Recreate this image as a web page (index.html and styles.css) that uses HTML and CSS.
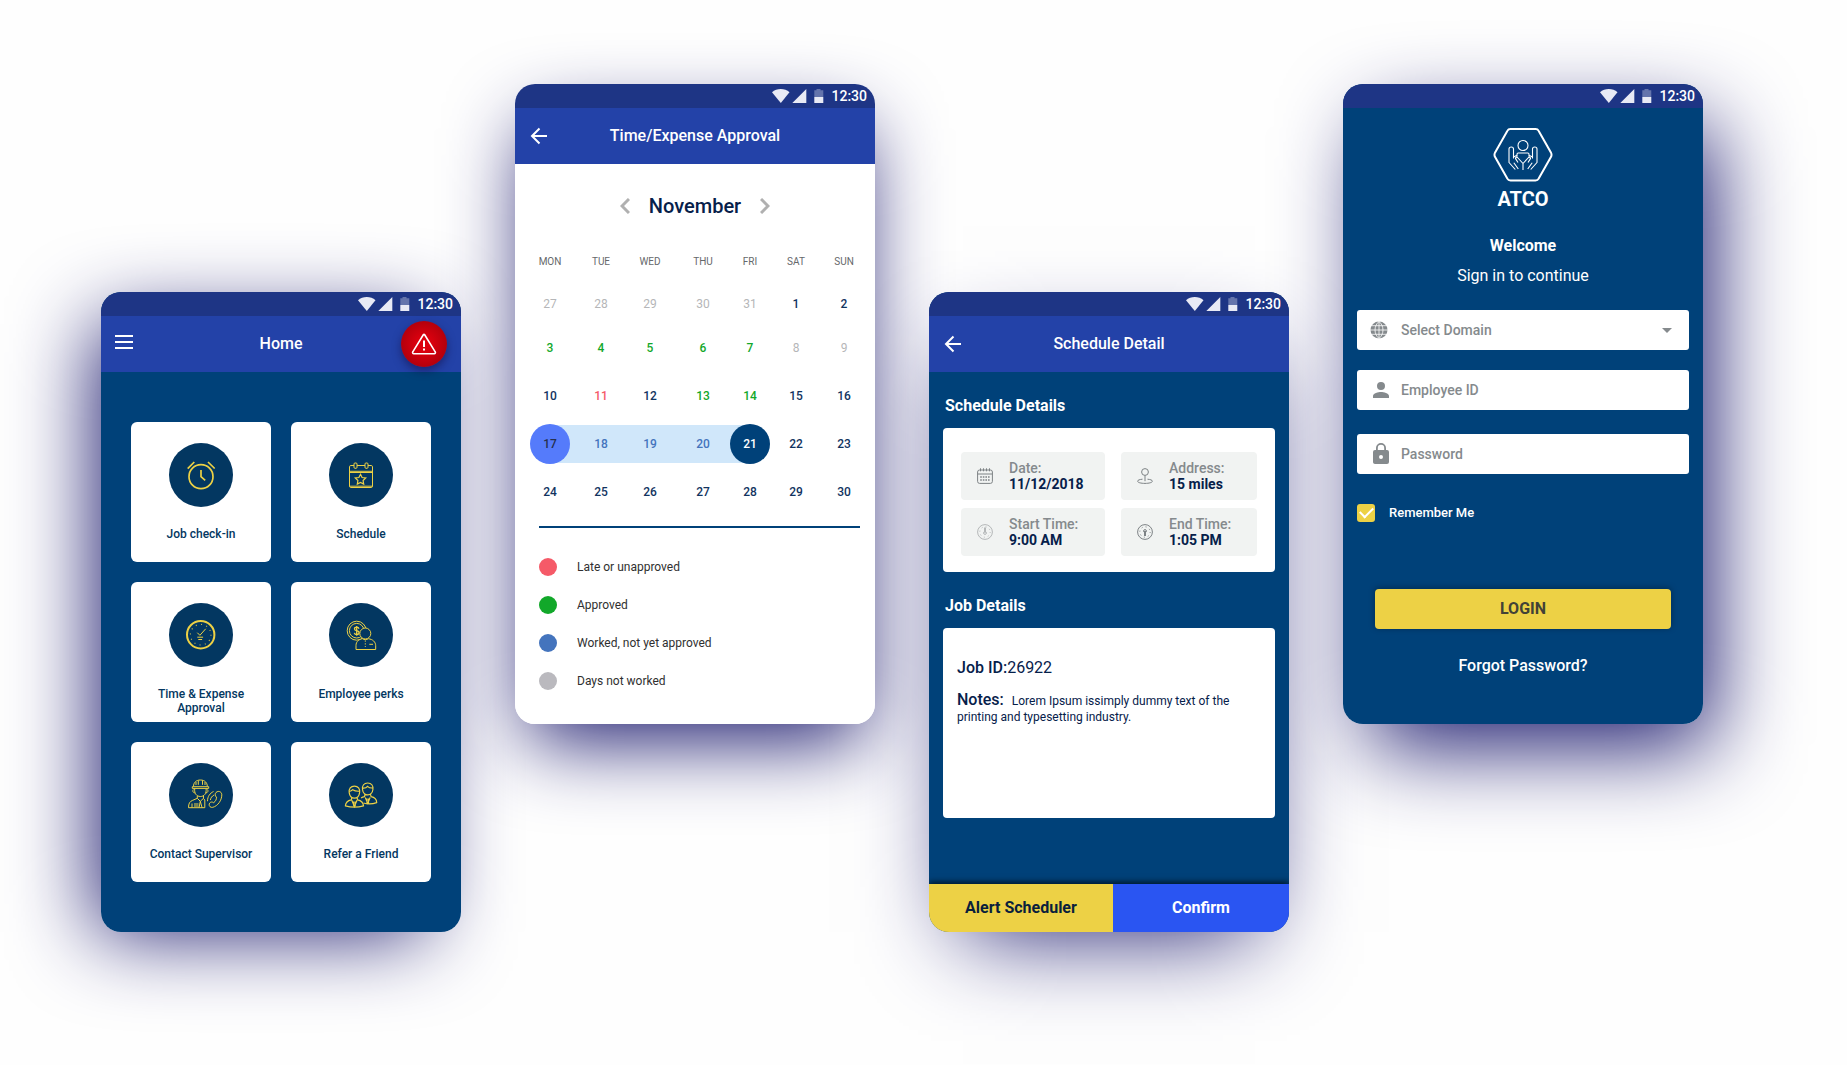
FILE: index.html
```html
<!DOCTYPE html>
<html lang="en">
<head>
<meta charset="utf-8">
<meta name="viewport" content="width=device-width, initial-scale=1">
<title>ATCO mobile screens</title>
<link rel="stylesheet" href="styles.css">
</head>
<body>
<svg class="sprite" aria-hidden="true">
  <symbol id="status-icons" viewBox="0 0 52 14">
    <path fill="#e8eaf5" d="M0 3.2C2.4 1.2 5.5 0 8.8 0s6.3 1.2 8.7 3.2L8.8 14z"/>
    <path fill="#e8eaf5" d="M34.300 0v14h-14z"/>
    <path fill="#e8eaf5" fill-opacity=".35" d="M44.500 0h4v1.200h2.800V8h-9V1.200h2.200z"/>
    <path fill="#e8eaf5" d="M42.300 8h9v6h-9z"/>
  </symbol>
  <symbol id="back" viewBox="0 0 24 24">
    <path fill="none" stroke="#fff" stroke-width="2" d="M18 12H3.500M10.500 4.500 3 12l7.500 7.500"/>
  </symbol>
</svg>

<main class="stage">

  <section class="phone phone-home">
    <div class="screen">
      <div class="status"><svg class="status-icons"><use href="#status-icons"/></svg><time>12:30</time></div>
      <header class="bar">
        <button class="icon-btn" type="button" aria-label="Menu">
          <svg width="24" height="24" viewBox="0 0 24 24"><path stroke="#fff" stroke-width="2" d="M0 4h18M0 10h18M0 16h18"/></svg>
        </button>
        <h1>Home</h1>
        <button class="alert-btn" type="button" aria-label="Emergency alert">
          <svg width="26" height="26" viewBox="0 0 26 26" fill="none" stroke="#fff" stroke-width="1.600" stroke-linejoin="round" stroke-linecap="round"><path d="M12.500 3.500 1.800 20.800a1.200 1.200 0 0 0 1 1.900h20.400a1.200 1.200 0 0 0 1-1.900L13.500 3.500a.6.6 0 0 0-1 0z"/><path stroke-width="2" stroke-linecap="butt" d="M13 9.500V16M13 17.500v2"/></svg>
        </button>
      </header>
      <nav class="tiles">
        <a class="tile" href="#check-in">
          <svg class="tile-icon" viewBox="0 0 64 64"><g stroke-width="1.700"><circle cx="32" cy="33.700" r="12"/><path d="M32 27v6.600l4.200 3.700M18.700 25.700l6.600-6.700M39 19l6.700 6.500"/></g></svg>
          <span>Job check-in</span>
        </a>
        <a class="tile" href="#schedule">
          <svg class="tile-icon" viewBox="0 0 64 64"><path d="M25 22.500h-3.200c-.8 0-1.300.5-1.300 1.300v19.400c0 .8.5 1.300 1.300 1.300h20.400c.8 0 1.300-.5 1.300-1.300V23.800c0-.8-.5-1.300-1.300-1.300H39M28 22.500h8M20.500 28.300h23M20.500 29.500h23M20.500 43.200h23"/><rect x="25" y="20" width="3" height="5.300" rx="1"/><rect x="36" y="20" width="3" height="5.300" rx="1"/><path stroke-width="1.200" d="m31.500 31.300 1.600 3.200 3.600.5-2.600 2.500.6 3.600-3.200-1.700-3.200 1.700.6-3.600-2.600-2.500 3.600-.5z"/></svg>
          <span>Schedule</span>
        </a>
        <a class="tile" href="#approval">
          <svg class="tile-icon" viewBox="0 0 64 64"><circle cx="31.700" cy="31.700" r="13.700" stroke-width="2"/><circle cx="31.700" cy="31.700" r="10.300" stroke-width="1.200" stroke-dasharray="1.100 4.293" stroke-opacity=".8"/><path d="m28.300 29.700 2.600 2.600 5.800-6.500M28.300 34.200h5.800M29.300 36.500h3.800"/></svg>
          <span>Time &amp; Expense Approval</span>
        </a>
        <a class="tile" href="#perks">
          <svg class="tile-icon" viewBox="0 0 64 64"><circle cx="27.700" cy="27.700" r="9.500"/><circle cx="27.700" cy="27.700" r="7.300"/><path stroke-width="1.300" d="M30 25.700c-.3-1-1.200-1.500-2.300-1.500-1.300 0-2.200.7-2.200 1.700 0 2.400 4.600 1.200 4.600 3.800 0 1-.9 1.800-2.300 1.800-1.300 0-2.200-.6-2.500-1.700M27.700 23v9.700"/><path fill="#033761" d="M27 46.500v-4c0-4 3-6.300 6.500-6.800 1.800 1.300 4 1.300 5.800 0 4.500.6 7.400 3.300 7.400 7v3.800z"/><circle fill="#033761" cx="36.300" cy="30.500" r="5.500"/><path d="M40.300 41.300H44"/><path stroke-dasharray="1.200 1.600" d="M36.300 37.500V44"/></svg>
          <span>Employee perks</span>
        </a>
        <a class="tile" href="#contact">
          <svg class="tile-icon" viewBox="0 0 64 64"><path d="M24.500 23.500c0-4 2.600-6.500 6.900-6.500s6.900 2.500 6.900 6.500M23.300 23.700h16.400v1.700H23.300zM29.300 17.500v4.300M33.500 17.500v4.300M27 19v3M36 19v3M25.700 25.700c-.6 4.800 2 7.800 5.700 7.800s6.300-3 5.700-7.800M24.300 26.500c-1 1.700-.3 3 1.500 3.500M38.500 26.500c1 1.700.3 3-1.500 3.500M28.300 33v2.300l-5 2.200c-2.500 1-3.800 3-3.800 7.200h16.300V37l-1.300-1.500V33M28.300 35.300l3 3 3.200-3M31.300 38.300l-1.300 6.400M31.300 38.300l1.800 6.400M23 40.500v4.200M25 41h4.500M25 43h4.500"/><path d="M48 28.800c2.500-1.200 4.800.5 4.800 3 0 5.500-4 11.200-9 12.500-2.200.5-4-1-3.600-3.200.3-1.500 1.800-2.300 3.200-2l1.300.6c2-1.500 2.800-3.300 2.800-5.600l-1-1c-.9-1.500-.2-3.500 1.500-4.300zM44.500 28.500c-3.500 1.800-6 4.700-6 9.700M45 32c-2 1.200-3.300 2.800-3.600 5"/></svg>
          <span>Contact Supervisor</span>
        </a>
        <a class="tile" href="#refer">
          <svg class="tile-icon" viewBox="0 0 64 64"><g stroke-width="1.200"><path d="M33.500 26.500c-.5-4 1.500-6.500 5.200-6.500s5.700 2.500 5.200 6.500c-.4 3-2.300 5.300-5.200 5.300s-4.800-2.300-5.200-5.300zM33.700 25c2 .3 3.700-.3 4.800-1.700 1.300 1.300 3 1.800 5.200 1.700M41.500 31.300l.6 2.300c3.600.6 5.500 2.500 5.600 6-4 1.400-9.400 1.500-13.200.4M36 31.300l-.5 2.400c-1.500.2-2.500.6-3.400 1.200M36.300 34.500l2.400 6 2.400-6M38 35.500v5M39.500 35.500v5"/><path fill="#033761" d="M22.800 34.600l-.5 2.200c-3.700.7-5.700 2.600-5.900 6.100 5.500 1.600 12.500 1.600 18.100 0-.2-3.500-2.200-5.400-5.900-6.100l-.5-2.200"/><path fill="#033761" d="M20.200 29.600c-.5-4 1.500-6.500 5.200-6.500s5.700 2.500 5.200 6.500c-.4 3-2.300 5.500-5.200 5.500s-4.800-2.500-5.200-5.500z"/><path d="M20.300 28.500c1.500-.2 2.600-.8 3.400-1.800 1.800 1.200 4 1.700 6.700 1.500M22.700 37l2.700 6.500 2.700-6.500M24.700 38.500v5M26.200 38.500v5"/></g></svg>
          <span>Refer a Friend</span>
        </a>
      </nav>
    </div>
  </section>

  <section class="phone phone-approval">
    <div class="screen light">
      <div class="status"><svg class="status-icons"><use href="#status-icons"/></svg><time>12:30</time></div>
      <header class="bar">
        <button class="icon-btn" type="button" aria-label="Back"><svg width="24" height="24"><use href="#back"/></svg></button>
        <h1>Time/Expense Approval</h1>
      </header>
      <div class="month">
        <button class="chevron" type="button" aria-label="Previous month"><svg width="10" height="16" viewBox="0 0 10 16"><path d="M9 1 2 8l7 7"/></svg></button>
        <h2>November</h2>
        <button class="chevron" type="button" aria-label="Next month"><svg width="10" height="16" viewBox="0 0 10 16"><path d="m1 1 7 7-7 7"/></svg></button>
      </div>
      <table class="calendar">
        <colgroup><col class="c1"><col class="c2"><col class="c3"><col class="c4"><col class="c5"><col class="c6"><col class="c7"></colgroup>
        <thead><tr><th>MON</th><th>TUE</th><th>WED</th><th>THU</th><th>FRI</th><th>SAT</th><th>SUN</th></tr></thead>
        <tbody>
          <tr class="first"><td class="off">27</td><td class="off">28</td><td class="off">29</td><td class="off">30</td><td class="off">31</td><td>1</td><td>2</td></tr>
          <tr><td class="ok">3</td><td class="ok">4</td><td class="ok">5</td><td class="ok">6</td><td class="ok">7</td><td class="off">8</td><td class="off">9</td></tr>
          <tr><td>10</td><td class="late">11</td><td>12</td><td class="ok">13</td><td class="ok">14</td><td>15</td><td>16</td></tr>
          <tr><td class="range start"><span>17</span></td><td class="range">18</td><td class="range">19</td><td class="range">20</td><td class="range end"><span>21</span></td><td>22</td><td>23</td></tr>
          <tr><td>24</td><td>25</td><td>26</td><td>27</td><td>28</td><td>29</td><td>30</td></tr>
        </tbody>
      </table>
      <ul class="legend">
        <li class="key-late">Late or unapproved</li>
        <li class="key-ok">Approved</li>
        <li class="key-worked">Worked, not yet approved</li>
        <li class="key-off">Days not worked</li>
      </ul>
    </div>
  </section>

  <section class="phone phone-detail">
    <div class="screen">
      <div class="status"><svg class="status-icons"><use href="#status-icons"/></svg><time>12:30</time></div>
      <header class="bar">
        <button class="icon-btn" type="button" aria-label="Back"><svg width="24" height="24"><use href="#back"/></svg></button>
        <h1>Schedule Detail</h1>
      </header>
      <div class="detail">
        <h2>Schedule Details</h2>
        <dl class="panel facts">
          <div class="fact">
            <svg viewBox="0 0 16 16"><rect x=".6" y="2" width="14.800" height="13.400" rx="2"/><path d="M.6 6h14.800M3.500.3v3M6.500.3v3M9.500.3v3M12.500.3v3"/><path stroke-width="1.400" stroke-dasharray="1.600 1" d="M3.200 9h10M3.200 12h10"/></svg>
            <dt>Date:</dt><dd>11/12/2018</dd>
          </div>
          <div class="fact">
            <svg viewBox="0 0 16 16"><circle cx="8" cy="4" r="3.400"/><path d="M8 7.400v5.800M5.500 11.200c-2.700.2-4.900.9-4.900 2 0 1.300 3.300 2.200 7.400 2.200s7.400-.9 7.400-2.200c0-1.100-2.200-1.800-4.900-2"/></svg>
            <dt>Address:</dt><dd>15 miles</dd>
          </div>
          <div class="fact">
            <svg class="faint" viewBox="0 0 16 16"><circle cx="8" cy="8" r="7.400"/><circle cx="8" cy="8" r="5.200" stroke-dasharray="1 3.080"/><circle cx="8" cy="9" r="1.400"/><path stroke-width="2" d="M8 3.500v5"/></svg>
            <dt>Start Time:</dt><dd>9:00 AM</dd>
          </div>
          <div class="fact">
            <svg viewBox="0 0 16 16"><circle cx="8" cy="8" r="7.400"/><circle cx="8" cy="8" r="5.200" stroke-dasharray="1 3.080"/><circle cx="8" cy="7" r="1.400"/><path stroke-width="2" d="M8 7v5"/></svg>
            <dt>End Time:</dt><dd>1:05 PM</dd>
          </div>
        </dl>
        <h2>Job Details</h2>
        <div class="panel job">
          <p class="job-id"><b>Job ID:</b>26922</p>
          <p class="notes"><b>Notes:</b> Lorem Ipsum issimply dummy text of the printing and typesetting industry.</p>
        </div>
      </div>
      <footer class="actions">
        <button class="alert-scheduler" type="button">Alert Scheduler</button>
        <button class="confirm" type="button">Confirm</button>
      </footer>
    </div>
  </section>

  <section class="phone phone-login">
    <div class="screen">
      <div class="status"><svg class="status-icons"><use href="#status-icons"/></svg><time>12:30</time></div>
      <div class="brand">
        <svg width="60" height="54" viewBox="0 0 60 54" fill="none" stroke="#fff" stroke-linejoin="round">
          <path stroke-width="2" d="M17.500 1h25c1.500 0 2.500.6 3.200 1.900l12.200 21.500c.9 1.700.9 3 0 4.700L45.700 50.600c-.7 1.300-1.700 1.900-3.200 1.900h-25c-1.500 0-2.500-.6-3.200-1.900L2.100 29.100c-.9-1.700-.9-3 0-4.700L14.300 2.900C15 1.600 16 1 17.500 1z"/>
          <g stroke-width="1.100"><circle cx="30" cy="17.500" r="5"/><path d="M24 28.500v-2.300c0-.7.400-1.200 1.200-1.200h9.600c.8 0 1.200.5 1.200 1.200v2.300M30 42v-6.500l-5.500-6c-1-.8-2.400.2-1.800 1.400l2.300 3.600M20.500 30.500V21c0-2.600-4.500-2.600-4.500 0v13.500l6.300 7M25.300 41l-4.500-6.200M30 35.500l5.500-6c1-.8 2.400.2 1.800 1.400L35 34.500M39.500 30.500V21c0-2.600 4.500-2.600 4.500 0v13.500l-6.300 7M34.700 41l4.500-6.200M20.500 29l3-1.500M39.500 29l-3-1.500"/></g>
        </svg>
        <h1>ATCO</h1>
      </div>
      <p class="welcome">Welcome</p>
      <p class="sign-in">Sign in to continue</p>
      <form class="login">
        <div class="field">
          <label for="domain"><svg width="18" height="18" viewBox="0 0 18 18" role="img" aria-label="Domain"><circle cx="9" cy="9" r="8.500" fill="#858a8d"/><path fill="none" stroke="#fff" stroke-width=".8" d="M9 0v18M0 9h18M1.500 4.700h15M1.500 13.300h15M9 .5C3.700 5 3.700 13 9 17.500 14.300 13 14.300 5 9 .5"/></svg></label>
          <select id="domain"><option>Select Domain</option></select>
          <svg class="caret" width="10" height="5" viewBox="0 0 10 5"><path fill="#858a8d" d="M0 0h10L5 5z"/></svg>
        </div>
        <div class="field">
          <label for="employee"><svg width="22" height="18" viewBox="0 0 22 18" role="img" aria-label="Employee ID"><path fill="#858a8d" d="M11 1a4 4 0 1 1 0 8 4 4 0 0 1 0-8zM3 17v-2c0-2.700 5.300-4 8-4s8 1.300 8 4v2z"/></svg></label>
          <input id="employee" type="text" placeholder="Employee ID">
        </div>
        <div class="field field-password">
          <label for="password"><svg width="22" height="22" viewBox="0 0 22 22" role="img" aria-label="Password"><path fill="#858a8d" fill-rule="evenodd" d="M17 7h-1V5A5 5 0 0 0 6 5v2H5a2 2 0 0 0-2 2v10c0 1.100.9 2 2 2h12a2 2 0 0 0 2-2V9a2 2 0 0 0-2-2zm-6 9a2 2 0 1 1 0-4 2 2 0 0 1 0 4zm3.200-9H7.800V5a3.200 3.200 0 0 1 6.400 0z"/></svg></label>
          <input id="password" type="password" placeholder="Password">
        </div>
        <label class="remember"><input type="checkbox" checked>Remember Me</label>
        <button class="submit" type="submit">LOGIN</button>
        <a class="forgot" href="#forgot">Forgot Password?</a>
      </form>
    </div>
  </section>

</main>
</body>
</html>
```

FILE: styles.css
```css
:root {
  --navy: #004179;
  --deep: #033761;
  --header: #2342a8;
  --status: #1e3585;
  --yellow: #edd145;
  --grey: #858a8d;
  --ink: #06204a;
  --shadow: #19176c;
}

* { box-sizing: border-box; }

body {
  margin: 0;
  background: #fefefe;
  color: var(--ink);
  font: 400 12px/16px Roboto, "Liberation Sans", sans-serif;
}

h1, h2, p, ul, dl, dd { margin: 0; padding: 0; }
button, input, select { font: inherit; color: inherit; border: 0; padding: 0; background: none; }
button { cursor: pointer; }
.sprite { display: block; width: 0; height: 0; }

.stage {
  display: grid;
  grid-template-columns: repeat(4, minmax(0, 1fr));
  align-items: start;
  gap: 54px;
  padding: 84px 144px 132px 101px;
  isolation: isolate;
}

/* Phone frames: the shadow sits on a layer behind every frame */
.phone { position: relative; }
.phone::before {
  content: "";
  position: absolute;
  inset: 0;
  z-index: -1;
  border-radius: 20px;
}
.phone-home, .phone-detail { margin-top: 208px; }
.phone-home::before { box-shadow: -20px 16px 84px -16px var(--shadow); }
.phone-approval::before { box-shadow: 0 30px 80px -14px var(--shadow); }
.phone-detail::before { box-shadow: 0 34px 90px -34px var(--shadow); }
.phone-login::before { box-shadow: 18px 32px 88px -10px var(--shadow); }

.screen {
  display: flex;
  flex-direction: column;
  min-height: 640px;
  overflow: hidden;
  border-radius: 20px;
  background: var(--navy);
}
.screen.light { background: #fff; }

.status {
  display: flex;
  align-items: center;
  justify-content: flex-end;
  gap: 7px;
  height: 24px;
  padding-right: 8px;
  background: var(--status);
  color: #fff;
  font-size: 14px;
  font-weight: 500;
}
.status-icons { width: 52px; height: 14px; }

.bar {
  display: grid;
  grid-template-columns: 1fr auto 1fr;
  align-items: center;
  height: 56px;
  padding: 0 14px;
  background: var(--header);
  color: #fff;
}
.bar h1 { font-size: 16px; font-weight: 500; line-height: 24px; }
.icon-btn { justify-self: start; width: 24px; height: 24px; }
.icon-btn svg, .alert-btn svg, .chevron svg { display: block; }
.alert-btn {
  display: grid;
  place-items: center;
  justify-self: end;
  width: 46px;
  height: 46px;
  border-radius: 50%;
  background: radial-gradient(circle closest-side, #dc000e 30%, #b3000c 100%);
  box-shadow: 0 4px 8px rgba(20, 10, 60, .5);
}

/* Home */
.tiles {
  display: grid;
  grid-template-columns: 1fr 1fr;
  grid-auto-rows: 140px;
  gap: 20px;
  padding: 50px 30px;
}
.tile {
  display: flex;
  flex-direction: column;
  align-items: center;
  gap: 20px;
  padding: 21px 12px 0;
  border-radius: 6px;
  background: #fff;
  color: var(--deep);
  font-weight: 500;
  line-height: 14px;
  text-align: center;
  text-decoration: none;
}
.tile-icon {
  flex: none;
  width: 64px;
  height: 64px;
  border-radius: 50%;
  background: var(--deep);
  fill: none;
  stroke: var(--yellow);
  stroke-width: 1;
}

/* Approval calendar */
.month {
  display: flex;
  align-items: center;
  justify-content: center;
  gap: 19px;
  padding: 28px 0 20px;
}
.month h2 { font-size: 20px; font-weight: 500; line-height: 28px; }
.chevron path { fill: none; stroke: #b0b0b0; stroke-width: 3; }

.calendar {
  table-layout: fixed;
  border-collapse: collapse;
  margin: 0 9px 0 7px;
  text-align: center;
}
.c1 { width: 56px; }
.c2 { width: 46px; }
.c3 { width: 52px; }
.c4 { width: 54px; }
.c5 { width: 40px; }
.c6 { width: 52px; }
.c7 { width: 44px; }
.calendar th { height: 44px; padding: 0; color: #66686b; font-size: 10px; font-weight: 400; }
.calendar td { height: 48px; padding: 0; color: #12345f; font-weight: 500; }
.calendar .first td { height: 40px; }
.calendar .off { color: #b5b6b8; font-weight: 400; }
.calendar .ok { color: #12a82a; }
.calendar .late { color: #f55a68; }
.calendar .range { color: #4474bd; background: linear-gradient(#d0e7fa, #d0e7fa) center / 100% 38px no-repeat; }
.calendar .start { background-position: right; background-size: 50% 38px; }
.calendar .end { background-position: left; background-size: 50% 38px; }
.range span {
  display: grid;
  place-items: center;
  width: 40px;
  height: 40px;
  margin: 0 auto;
  border-radius: 50%;
}
.start span { background: #557bfb; color: #26304f; }
.end span { background: var(--navy); color: #fff; }

.legend {
  display: grid;
  gap: 20px;
  margin: 10px 15px 0 24px;
  padding: 30px 0;
  border-top: 2px solid var(--navy);
  color: #303030;
  line-height: 18px;
  list-style: none;
}
.legend li { display: flex; gap: 20px; }
.legend li::before { content: ""; width: 18px; height: 18px; border-radius: 50%; }
.key-late::before { background: #f55a68; }
.key-ok::before { background: #12a82a; }
.key-worked::before { background: #4474bd; }
.key-off::before { background: #bab9be; }

/* Schedule detail */
.detail { padding: 0 14px; }
.detail h2 {
  margin: 22px 2px 10px;
  color: #fff;
  font-size: 16px;
  font-weight: 700;
  line-height: 24px;
}
.panel { border-radius: 4px; background: #fff; }
.facts {
  display: grid;
  grid-template-columns: 144fr 136fr;
  gap: 8px 16px;
  padding: 24px 18px 16px;
}
.fact {
  display: grid;
  grid-template-columns: 16px 1fr;
  column-gap: 16px;
  padding: 8px 0 8px 16px;
  border-radius: 4px;
  background: #f1f3f2;
  font-size: 14px;
}
.fact svg {
  grid-row: span 2;
  align-self: center;
  width: 16px;
  height: 16px;
  fill: none;
  stroke: #7d8285;
}
.fact svg.faint { stroke: #b4b7b8; }
.fact dt { color: var(--grey); font-weight: 500; }
.fact dd { font-weight: 700; }
.job { min-height: 190px; padding: 28px 14px; }
.job b { font-size: 16px; font-weight: 500; }
.job-id { margin-bottom: 12px; font-size: 16px; line-height: 24px; }
.notes b { margin-right: 5px; }

.actions {
  display: grid;
  grid-template-columns: 184fr 176fr;
  margin-top: auto;
  box-shadow: 0 -2px 6px rgba(0, 0, 0, .7);
  font-size: 16px;
  font-weight: 700;
}
.actions button { height: 48px; }
.alert-scheduler { background: var(--yellow); color: #0a1f3c; }
.confirm { background: #2a55f2; color: #fff; }

/* Login */
.phone-login .screen { color: #fff; text-align: center; }
.brand { padding-top: 20px; }
.brand svg { display: block; margin: 0 auto 5px; }
.brand h1 { font-size: 20px; font-weight: 700; line-height: 24px; }
.welcome, .sign-in { font-size: 16px; line-height: 24px; }
.welcome { margin-top: 23px; font-weight: 700; }
.sign-in { margin-top: 6px; }
.login {
  display: flex;
  flex-direction: column;
  padding: 22px 14px;
}
.field {
  display: flex;
  align-items: center;
  height: 40px;
  margin-bottom: 20px;
  padding: 0 17px 0 13px;
  border-radius: 3px;
  background: #fff;
  color: var(--grey);
  font-size: 14px;
  font-weight: 500;
}
.field label { flex: none; width: 31px; text-align: left; }
.field label svg { display: block; }
.field input, .field select {
  flex: 1;
  min-width: 0;
  height: 40px;
  appearance: none;
  outline: 0;
}
.field input::placeholder { color: var(--grey); opacity: 1; }
.caret { pointer-events: none; }
.field-password { margin-top: 4px; }
.remember {
  display: flex;
  align-items: center;
  gap: 14px;
  margin-top: 10px;
  font-size: 13px;
  font-weight: 500;
  line-height: 18px;
}
.remember input {
  display: grid;
  place-items: center;
  width: 18px;
  height: 18px;
  margin: 0;
  border-radius: 3px;
  background: #fff;
  appearance: none;
}
.remember input:checked { background: var(--yellow); }
.remember input:checked::after {
  content: "";
  width: 11px;
  height: 6px;
  margin-bottom: 4px;
  border: solid #fff;
  border-width: 0 0 2px 2px;
  transform: rotate(-45deg);
}
.submit {
  height: 40px;
  margin: 67px 18px 25px;
  border-radius: 4px;
  background: var(--yellow);
  box-shadow: 0 -1px 6px rgba(0, 0, 0, .35);
  color: #424237;
  font-size: 16px;
  font-weight: 700;
}
.forgot {
  align-self: center;
  color: #fff;
  font-size: 16px;
  font-weight: 500;
  line-height: 24px;
  text-decoration: none;
}

@media (max-width: 1400px) {
  .stage { grid-template-columns: repeat(auto-fit, minmax(340px, 1fr)); padding: 54px; }
  .phone-home, .phone-detail { margin-top: 0; }
}
```
